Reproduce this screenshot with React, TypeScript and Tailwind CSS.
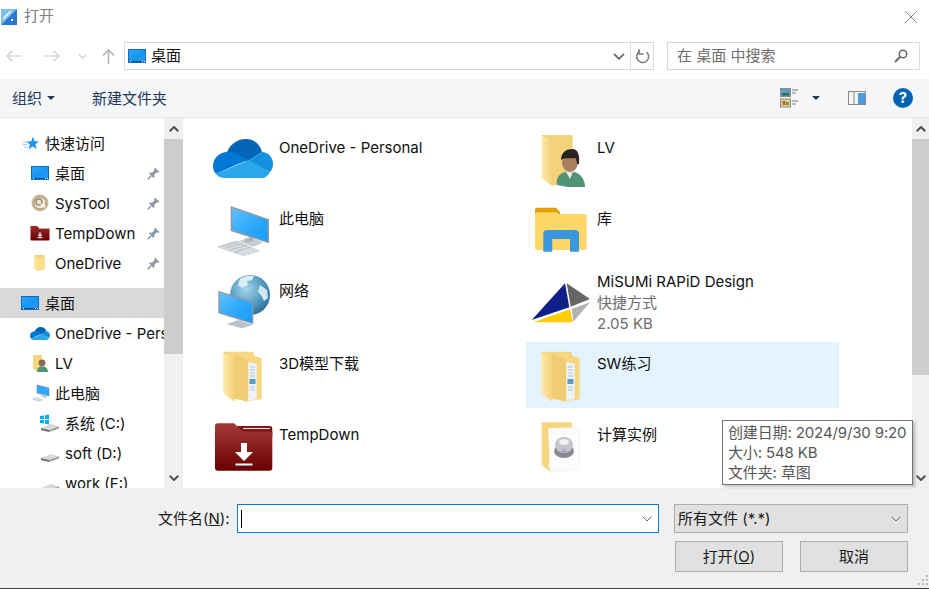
import React from "react";

const Desktop = ({ className = "" }: { className?: string }) => (
  <svg width="18" height="14" viewBox="0 0 18 14" className={"shrink-0 " + className}>
    <defs>
      <linearGradient id="dsk" x1="0" y1="0" x2="1" y2="1">
        <stop offset="0" stopColor="#2aa8ff" />
        <stop offset="1" stopColor="#0a84e8" />
      </linearGradient>
    </defs>
    <rect x="0.5" y="0.5" width="17" height="13" fill="url(#dsk)" stroke="#0a6fc2" />
    <path d="M8 12 L17 3 V12Z" fill="#2f9cf3" opacity=".6" />
    <path d="M1 12.5h16" stroke="#0b4f8c" />
    <path d="M2 12.5h1M14 12.5h1M16 12.5h1" stroke="#fff" />
  </svg>
);

const Star = () => (
  <svg width="16" height="15" viewBox="0 0 16 15" className="shrink-0">
    <path d="M10 0.5 L11.4 5 L16 5.4 L12.4 8.3 L13.8 13 L9.7 10.4 L5.5 13.5 L6.8 8.6 L3.5 5.6 L8.2 5.2Z" fill="#2196e8" />
    <path d="M0 6h4M0 8.5h4M1 11h4" stroke="#9ccdf0" strokeWidth="1" />
  </svg>
);

const Pin = () => (
  <svg width="13" height="13" viewBox="0 0 13 13" className="shrink-0">
    <path d="M8 0.5 L12.5 5 L11 5.8 L9.5 5.6 L7.2 8 L7.4 10.2 L6.4 11 L2 6.6 L2.8 5.6 L5 5.8 L7.4 3.5 L7.2 2Z" fill="#8c99a5" />
    <path d="M4 9 L0.8 12.2" stroke="#8c99a5" strokeWidth="1.6" />
  </svg>
);

const SmallSysTool = () => (
  <svg width="18" height="18" viewBox="0 0 18 18" className="shrink-0">
    <circle cx="9" cy="9" r="8.5" fill="#c9b998" />
    <circle cx="9" cy="9" r="6" fill="#efe8d8" stroke="#a8977a" />
    <circle cx="8" cy="8" r="3" fill="none" stroke="#9e8c6e" strokeWidth="1.6" />
    <path d="M10 10l4 3" stroke="#fff" strokeWidth="1.6" />
  </svg>
);

const SmallRedFolder = () => (
  <svg width="20" height="16" viewBox="0 0 20 16" className="shrink-0">
    <defs>
      <linearGradient id="srf" x1="0" y1="0" x2="0" y2="1">
        <stop offset="0" stopColor="#9c2a2a" />
        <stop offset="1" stopColor="#6a0000" />
      </linearGradient>
    </defs>
    <path d="M0.5 1 H7 L9 3 H19.5 V14.5 Q19.5 15.5 18.5 15.5 H1.5 Q0.5 15.5 0.5 14.5Z" fill="url(#srf)" />
    <path d="M9 3.5H19" stroke="#e6d0d0" strokeWidth=".8" />
    <path d="M10 7v4M8.2 9.5L10 11.5L11.8 9.5M7.5 12.8h5" stroke="#fff" strokeWidth="1.1" fill="none" />
  </svg>
);

const SmallFolder = () => (
  <svg width="14" height="18" viewBox="0 0 14 18" className="shrink-0">
    <path d="M1 1H11V15L4 17Z" fill="#f2cf73" />
    <path d="M1 1L4 3V17L1 15Z" fill="#ffe79d" />
    <path d="M4 3H12V15L4 17Z" fill="#fbdc88" />
  </svg>
);

const Cloud = () => (
  <g>
    <path d="M13 17 C15 6 24 0 33 0 C41 0 47 5 49 13 L35 22Z" fill="#0364b8" />
    <path d="M13 13 C7 14 0 18 0 27 C0 30 1 33 3 35 L25 25 L36 21 L24 15 C20 13 17 13 13 13Z" fill="#0078d4" />
    <path d="M49 13 C55 13 60 18 60 25 C60 28 59 31 57 33 L35 22Z" fill="#1490df" />
    <path d="M3 35 C5 37.5 8 39 12 39 H49 C52 39 55 37 57 33 L36 21Z" fill="#28a8ea" />
  </g>
);

const SmallCloud = () => (
  <svg width="20" height="13" viewBox="0 0 60 39" className="shrink-0">
    <Cloud />
  </svg>
);

const MonitorShape = ({ pts, inner }: { pts: string; inner: string }) => (
  <>
    <polygon points={pts} fill="#8d9aa5" />
    <polygon points={inner} fill="url(#scr)" />
  </>
);

const Grad = () => (
  <defs>
    <linearGradient id="scr" x1="0" y1="0" x2="1" y2="1">
      <stop offset="0" stopColor="#63c1ff" />
      <stop offset=".55" stopColor="#2ea9fb" />
      <stop offset="1" stopColor="#189bf5" />
    </linearGradient>
    <linearGradient id="fld" x1="0" y1="0" x2="1" y2="0">
      <stop offset="0" stopColor="#ffe9a5" />
      <stop offset="1" stopColor="#f3d27b" />
    </linearGradient>
    <linearGradient id="red" x1="0" y1="0" x2="0" y2="1">
      <stop offset="0" stopColor="#a43a3a" />
      <stop offset="1" stopColor="#6a0000" />
    </linearGradient>
    <radialGradient id="glb" cx=".4" cy=".35" r=".8">
      <stop offset="0" stopColor="#a5d6ea" />
      <stop offset=".6" stopColor="#4a93bb" />
      <stop offset="1" stopColor="#1f5a80" />
    </radialGradient>
  </defs>
);

const Big = ({ children }: { children: React.ReactNode }) => (
  <svg width="64" height="64" viewBox="0 0 64 64" className="shrink-0 mt-px">
    <Grad />
    {children}
  </svg>
);

const PcBig = () => (
  <Big>
    <polygon points="29,42 40,38.7 53.3,43.3 43.3,47.7" fill="#c3ccd3" />
    <polygon points="34,40 42,38 44,42 36,43" fill="#aab5bd" />
    <polygon points="7.3,47.7 26.7,42 49.3,52 33.3,56.7" fill="#d8dde1" stroke="#b4bbc1" strokeWidth=".5" />
    <path d="M12 47.5l16-4.5M16 49l17-5M20 51l17-5M25 53l16-5" stroke="#9aa3aa" strokeWidth=".8" strokeDasharray="1.5 .8" />
    <MonitorShape pts="20.7,7 59,20.3 59,44.3 20.7,32" inner="22.2,9 57.5,21.3 57.5,42.3 22.2,30.8" />
  </Big>
);

const NetBig = () => (
  <Big>
    <circle cx="40" cy="24" r="20" fill="url(#glb)" />
    <path d="M30 8c4-3 10-4 14-3l-2 4-5 1 1 4-6 3-4-3Z" fill="#d9eef6" />
    <path d="M50 14l7 5 1 8-4 3-3-6-3-3Z" fill="#cfe8f2" />
    <polygon points="16.7,53 28.3,49 43.3,54 31.7,57.3" fill="#b9c3cb" />
    <MonitorShape pts="8.3,19.7 43.3,30.7 43.3,53.3 8.3,42.3" inner="9.6,21.6 42,31.8 42,51.4 9.6,41.2" />
  </Big>
);

const FolderDoc = () => (
  <Big>
    <polygon points="13.3,8.7 43.3,8.7 44.3,13 51.7,15.3 51.7,56.3 33.3,58.7" fill="#f6d67e" />
    <polygon points="24,11 38.5,17 38.5,57.7 24,56" fill="#f0cd72" />
    <polygon points="38.3,18.7 46.7,21 46.7,56 38.3,57.7" fill="#eef2f5" />
    <path d="M40 24h5M40 27h5M40 30h5M40 33h5M40 44h5M40 47h5" stroke="#a9c7dd" strokeWidth="1" />
    <rect x="39.5" y="36" width="6" height="5" fill="#5b9cc4" />
    <polygon points="13.3,9.7 24.3,15.3 24.3,58.7 13.3,50.3" fill="url(#fld)" />
  </Big>
);

const RedBig = () => (
  <Big>
    <path d="M26 11 H60 Q62.3 11 62.3 14 V22 H30Z" fill="#7c1010" />
    <path d="M33 13.5 H60" stroke="#e8d5d5" strokeWidth="1.2" />
    <path d="M5 11 Q5 8.3 8 8.3 H24 L33 16.5 H62.3 V53 Q62.3 55.7 59.5 55.7 H8 Q5 55.7 5 53Z" fill="url(#red)" />
    <path d="M31 28 H37 V37 H43 L34 46 L25 37 H31Z" fill="#fff" />
    <path d="M25.5 49.5 H42.5" stroke="#fff" strokeWidth="2" />
  </Big>
);

const UserBig = () => (
  <Big>
    <polygon points="13.7,8 44.7,8 44.7,51.3 24.3,59" fill="#f3d27b" />
    <polygon points="13.7,8 24.3,14.7 24.3,59 13.7,51.3" fill="url(#fld)" />
    <path d="M28.7 58 C28 50 32 46 38 45 L46 45 C52 46 57 52 57 60 L40 60Z" fill="#4f9374" />
    <path d="M38 45 L42 52 L45 45Z" fill="#e5eaec" />
    <ellipse cx="42" cy="35" rx="8" ry="10" fill="#a9805f" />
    <path d="M33 33 C33 25 39 22 44 22 C50 22 52 28 51 37 C49 38 48.5 35 48 31 C43 32 37 30 33 33Z" fill="#2a2320" />
  </Big>
);

const LibBig = () => (
  <Big>
    <path d="M7 11 Q7 8.7 9 8.7 H28 L32 13 V17 H7Z" fill="#e3a000" />
    <path d="M7 15 Q7 13.3 9 13.3 H29 L31 15 H56.7 Q58.7 15 58.7 17 V49 Q58.7 51 56.7 51 H9 Q7 51 7 49Z" fill="#ffd768" />
    <path d="M15.3 52.7 V35 Q15.3 31 19 31 H47 Q51 31 51 35 V52.7 H42 V40 H24.3 V52.7Z" fill="#3a96dd" />
  </Big>
);

const MisumiBig = () => (
  <Big>
    <polygon points="37,12.3 3.7,49 41.3,36.3" fill="#0f2088" />
    <polygon points="38.7,12.3 62,28 42.7,35.7" fill="#666666" />
    <polygon points="62,31.3 45.3,50.7 43.7,38" fill="#b3b3b3" />
    <polygon points="42,38.3 44.7,51.3 5.3,51.3" fill="#ffcc00" />
  </Big>
);

const CalcBig = () => (
  <Big>
    <polygon points="13.7,7.3 44.3,7.3 44.3,14 20,50 24,58.3 13.7,50" fill="#f5d67f" />
    <polygon points="20.3,13.3 51.3,12.3 51.3,54.3 22,57.5" fill="#fbfbfb" stroke="#e6e6e6" strokeWidth=".5" />
    <ellipse cx="36" cy="36" rx="10" ry="7" fill="#8a8790" />
    <ellipse cx="36" cy="30" rx="9" ry="8" fill="#c5c5cc" />
    <ellipse cx="36" cy="27" rx="5" ry="3" fill="#f1f1f4" />
    <path d="M36 33v7M33 36.5h6" stroke="#7f78d8" strokeWidth=".6" />
  </Big>
);

const Chev = ({ up = false, color = "#505050", w = 10, sw = 2 }: { up?: boolean; color?: string; w?: number; sw?: number }) => (
  <svg width={w} height={Math.round(w * 0.6)} viewBox="0 0 10 6" className="shrink-0">
    <path d={up ? "M0.7 5.3L5 1L9.3 5.3" : "M0.7 0.7L5 5L9.3 0.7"} fill="none" stroke={color} strokeWidth={sw} />
  </svg>
);

const Arrow = ({ dir }: { dir: "l" | "r" | "u" }) => {
  const d = dir === "l" ? "M15 6H1M6.5 0.7L1 6L6.5 11.3" : dir === "r" ? "M0 6H14M8.5 0.7L14 6L8.5 11.3" : "M6.5 15V1M1 6.5L6.5 1L12 6.5";
  return (
    <svg width={dir === "u" ? 13 : 15} height={dir === "u" ? 15 : 12} viewBox={dir === "u" ? "0 0 13 15" : "0 0 15 12"} className="shrink-0">
      <path d={d} fill="none" stroke={dir === "u" ? "#b4b4b4" : "#d6d6d6"} strokeWidth="1.6" />
    </svg>
  );
};

const Side = ({ pl, icon, label, pin = false, active = false, gap = 6 }: { pl: string; icon: React.ReactNode; label: string; pin?: boolean; active?: boolean; gap?: number }) => (
  <div className={"relative flex h-[30px] items-center overflow-hidden whitespace-nowrap text-[#0f0f0f] " + pl + (active ? " bg-[#d9d9d9]" : "")}>
    <div className="flex items-center justify-center" style={{ marginRight: gap }}>{icon}</div>
    <span className="pt-[2px]">{label}</span>
    {pin && (
      <div className="absolute right-[4px] top-[9px]">
        <Pin />
      </div>
    )}
  </div>
);

const Item = ({ icon, title, sub, hot = false, cjk = false }: { icon: React.ReactNode; title: string; sub?: string[]; hot?: boolean; cjk?: boolean }) => (
  <div className={"flex h-[66px] pl-[2px] " + (hot ? "bg-[#e5f3ff]" : "")}>
    {icon}
    <div className={"ml-[5px] leading-[21px] text-[#0f0f0f] " + (sub ? "pt-[1px]" : cjk ? "pt-[10px]" : "pt-[11px]")}>
      <div className="whitespace-nowrap">{title}</div>
      {sub?.map((s) => (
        <div key={s} className="whitespace-nowrap text-[#6d6d6d]">{s}</div>
      ))}
    </div>
  </div>
);

const Scrollbar = ({ width, thumb }: { width: string; thumb: string }) => (
  <div className={"flex h-full shrink-0 flex-col bg-[#f0f0f0] " + width}>
    <div className="flex h-[21px] items-center justify-center bg-[#f0f0f0]">
      <Chev up />
    </div>
    <div className={"bg-[#cdcdcd] " + thumb} />
    <div className="flex-1" />
    <div className="flex h-[21px] items-center justify-center">
      <Chev />
    </div>
  </div>
);

const Drive = ({ win = false }: { win?: boolean }) => (
  <svg width="20" height="18" viewBox="0 0 20 18" className="shrink-0">
    {win && <path d="M0 2l4-.6V5H0ZM5 1.2L9 .6V5H5ZM0 6h4v3.6L0 9ZM5 6h4v4.4L5 9.8Z" fill="#00adef" />}
    <path d="M1 14 L11 10 L19 12.5 L9 16Z" fill="#d8d8d8" />
    <path d="M1 14 L9 16 V18 L1 16Z" fill="#6d6d6d" />
    <path d="M9 16 L19 12.5 V14.5 L9 18Z" fill="#9a9a9a" />
  </svg>
);

const Pc = () => (
  <svg width="20" height="18" viewBox="0 0 20 18" className="shrink-0">
    <path d="M7 1 L19 4 V12 L7 9Z" fill="#2ea9fb" stroke="#7d8b96" strokeWidth=".6" />
    <path d="M1 15 L7 13 L14 16 L8 18Z" fill="#d4d9dd" />
    <path d="M10 12 L13 11 L18 13 L15 14Z" fill="#c1c9cf" />
  </svg>
);

const UserSmall = () => (
  <svg width="18" height="18" viewBox="0 0 18 18" className="shrink-0">
    <path d="M1 1H10V13L4 17L1 14Z" fill="#f6d67e" />
    <circle cx="10" cy="9" r="3.4" fill="#8a6a50" />
    <path d="M5 18C5 14 7 12.5 10 12.5C14 12.5 16 14.5 16 18Z" fill="#4f9374" />
  </svg>
);

export default function App() {
  return (
    <div
      className="relative flex h-[589px] w-[929px] flex-col overflow-hidden bg-white text-[15px]"
      style={{ fontFamily: 'Inter, "Noto Sans CJK SC", sans-serif' }}
    >
      {/* title */}
      <div className="flex h-[33px] shrink-0 items-center pl-[1px] pr-[12px]">
        <svg width="16" height="16" viewBox="0 0 16 16" className="shrink-0">
          <rect width="16" height="16" fill="#7cc0ea" />
          <path d="M16 0V16H0Z" fill="#2b78d4" />
          <path d="M2 10L10 2" stroke="#d8eefb" strokeWidth="2" />
          <rect x="10" y="10" width="2" height="2" fill="#fff" />
        </svg>
        <span className="ml-[7px] text-[#808080]">打开</span>
        <svg width="12" height="12" viewBox="0 0 12 12" className="ml-auto">
          <path d="M0 0L12 12M12 0L0 12" stroke="#8c8c8c" strokeWidth="1" />
        </svg>
      </div>
      {/* nav */}
      <div className="flex h-[46px] shrink-0 items-start pt-[9px]">
        <div className="flex h-[28px] w-[124px] shrink-0 items-center pl-[6px]">
          <Arrow dir="l" />
          <div className="ml-[24px]"><Arrow dir="r" /></div>
          <div className="ml-[18px]"><Chev color="#d0d0d0" w={9} sw={1.6} /></div>
          <div className="ml-[15px]"><Arrow dir="u" /></div>
        </div>
        <div className="flex h-[28px] w-[530px] shrink-0 items-center border border-[#d9d9d9] pl-[3px]">
          <Desktop />
          <span className="ml-[5px] text-[#0f0f0f]">桌面</span>
          <div className="ml-auto mr-[5px]"><Chev color="#6b6b6b" w={12} sw={1.6} /></div>
          <div className="flex h-full w-[23px] items-center justify-center border-l border-[#d9d9d9]">
            <svg width="15" height="15" viewBox="0 0 15 15">
              <path d="M5 2.2 A6 6 0 1 0 11.5 3" fill="none" stroke="#7a7a7a" strokeWidth="1.5" />
              <path d="M4 0V5H8.5" fill="none" stroke="#7a7a7a" strokeWidth="1.5" />
            </svg>
          </div>
        </div>
        <div className="ml-[13px] flex h-[28px] w-[253px] shrink-0 items-center border border-[#d9d9d9] pl-[9px] pr-[11px]">
          <span className="text-[#6d6d6d]">在 桌面 中搜索</span>
          <svg width="14" height="14" viewBox="0 0 14 14" className="ml-auto">
            <circle cx="9" cy="5" r="3.7" fill="none" stroke="#6a6a6a" strokeWidth="1.6" />
            <path d="M6.2 7.8L1 13" stroke="#6a6a6a" strokeWidth="2" />
          </svg>
        </div>
      </div>
      {/* toolbar */}
      <div className="flex h-[39px] shrink-0 items-center border-b border-[#e5e5e5] bg-[#f5f6f7] pl-[12px] text-[#1e395b]">
        <span className="pt-[2px]">组织</span>
        <svg width="8" height="4" viewBox="0 0 8 4" className="ml-[5px]"><path d="M0 0H8L4 4Z" fill="#1e395b" /></svg>
        <span className="ml-[37px] pt-[2px]">新建文件夹</span>
        <svg width="20" height="20" viewBox="0 0 20 20" className="ml-[613px]">
          <rect x=".5" y=".5" width="10" height="8" fill="#5d9bbf" stroke="#8c8c8c" />
          <rect x="2" y="5" width="7" height="2.5" fill="#3e6b52" />
          <rect x=".5" y="11" width="10" height="8" fill="#e5d18b" stroke="#8c8c8c" />
          <rect x="2.5" y="13" width="3" height="4" fill="#b36a3a" />
          <rect x="6" y="14" width="3" height="3" fill="#6fa34a" />
          <path d="M12 2h6M12 5h4M12 13h6M12 16h4" stroke="#777" />
        </svg>
        <svg width="8" height="4" viewBox="0 0 8 4" className="ml-[12px]"><path d="M0 0H8L4 4Z" fill="#1e395b" /></svg>
        <svg width="18" height="14" viewBox="0 0 18 14" className="ml-[28px]">
          <rect x=".5" y=".5" width="17" height="13" fill="#f4f4f4" stroke="#8a8a8a" />
          <rect x="10" y="2" width="7" height="11" fill="#4a9ade" />
          <path d="M6 1V13" stroke="#8a8a8a" />
        </svg>
        <div className="ml-[27px] flex h-[20px] w-[20px] items-center justify-center rounded-full bg-[#0063b1] text-[15px] font-bold text-white">?</div>
      </div>
      {/* body */}
      <div className="flex min-h-0 flex-1">
        <div className="flex h-full w-[184px] shrink-0">
          <div className="h-full w-[164px] shrink-0 overflow-hidden pt-[10px]">
            <Side pl="pl-[23px]" icon={<Star />} label="快速访问" />
            <Side pl="pl-[31px]" icon={<Desktop />} label="桌面" pin />
            <Side pl="pl-[31px]" icon={<SmallSysTool />} label="SysTool" pin />
            <Side pl="pl-[30px]" gap={5} icon={<SmallRedFolder />} label="TempDown" pin />
            <Side pl="pl-[33px]" gap={8} icon={<SmallFolder />} label="OneDrive" pin />
            <div className="h-[10px]" />
            <Side pl="pl-[21px]" icon={<Desktop />} label="桌面" active />
            <Side pl="pl-[30px]" gap={5} icon={<SmallCloud />} label="OneDrive - Personal" />
            <Side pl="pl-[32px]" gap={5} icon={<UserSmall />} label="LV" />
            <Side pl="pl-[30px]" gap={5} icon={<Pc />} label="此电脑" />
            <Side pl="pl-[40px]" gap={5} icon={<Drive win />} label="系统 (C:)" />
            <Side pl="pl-[40px]" gap={5} icon={<Drive />} label="soft (D:)" />
            <Side pl="pl-[40px]" gap={5} icon={<Drive />} label="work (F:)" />
          </div>
          <div className="flex h-full w-[20px] shrink-0 flex-col">
            <Scrollbar width="w-[19px]" thumb="h-[215px]" />
          </div>
        </div>
        <div className="grid flex-1 auto-rows-[66px] grid-cols-[313px_313px] content-start gap-x-[5px] gap-y-[6px] overflow-hidden pl-[24px] pt-[8px]">
          <Item title="OneDrive - Personal" icon={<Big><g transform="translate(3 12)"><Cloud /></g></Big>} />
          <Item title="LV" icon={<UserBig />} />
          <Item cjk title="此电脑" icon={<PcBig />} />
          <Item cjk title="库" icon={<LibBig />} />
          <Item cjk title="网络" icon={<NetBig />} />
          <Item title="MiSUMi RAPiD Design" sub={["快捷方式", "2.05 KB"]} icon={<MisumiBig />} />
          <Item title="3D模型下载" icon={<FolderDoc />} />
          <Item title="SW练习" hot icon={<FolderDoc />} />
          <Item cjk title="TempDown" icon={<RedBig />} />
          <Item cjk title="计算实例" icon={<CalcBig />} />
        </div>
        <Scrollbar width="w-[17px]" thumb="h-[236px]" />
      </div>
      {/* bottom */}
      <div className="relative h-[101px] shrink-0 border-b border-[#404040] bg-[#f0f0f0] pt-[16px] text-[#1a1a1a]">
        <div className="flex h-[29px] items-center pl-[158px]">
          <span className="w-[79px] shrink-0 whitespace-nowrap pt-[2px]">文件名(<u>N</u>):</span>
          <div className="flex h-[29px] w-[422px] shrink-0 items-center border border-[#0078d7] bg-white pl-[3px] pr-[6px]">
            <div className="h-[18px] w-px bg-black" />
            <div className="ml-auto"><Chev color="#6b6b6b" w={10} sw={1} /></div>
          </div>
          <div className="ml-[15px] flex h-[29px] w-[234px] shrink-0 items-center border border-[#adadad] bg-[#e1e1e1] pl-[3px] pr-[6px]">
            <span className="pt-[2px]">所有文件 (*.*)</span>
            <div className="ml-auto"><Chev color="#6b6b6b" w={10} sw={1} /></div>
          </div>
        </div>
        <div className="mt-[8px] flex justify-end gap-[17px] pr-[21px]">
          <div className="flex h-[31px] w-[108px] items-center justify-center border border-[#adadad] bg-[#e1e1e1]">
            <span className="pt-[2px]">打开(<u>O</u>)</span>
          </div>
          <div className="flex h-[31px] w-[108px] items-center justify-center border border-[#adadad] bg-[#e1e1e1]">
            <span className="pt-[2px]">取消</span>
          </div>
        </div>
        <svg width="12" height="12" viewBox="0 0 12 12" className="absolute bottom-[1px] right-0">
          <path d="M9 0h2v2H9ZM5 4h2v2H5ZM9 4h2v2H9ZM1 8h2v2H1ZM5 8h2v2H5ZM9 8h2v2H9Z" fill="#bdbdbd" />
        </svg>
      </div>
      {/* tooltip */}
      <div className="absolute left-[722px] top-[420px] h-[65px] w-[191px] border border-[#767676] bg-white pl-[5px] pt-[2px] text-[15px] leading-[20px] tracking-[-0.13px] text-[#575757] shadow-[2px_2px_3px_rgba(0,0,0,0.25)]">
        <div className="whitespace-nowrap">创建日期: 2024/9/30 9:20</div>
        <div className="whitespace-nowrap">大小: 548 KB</div>
        <div className="whitespace-nowrap">文件夹: 草图</div>
      </div>
    </div>
  );
}
